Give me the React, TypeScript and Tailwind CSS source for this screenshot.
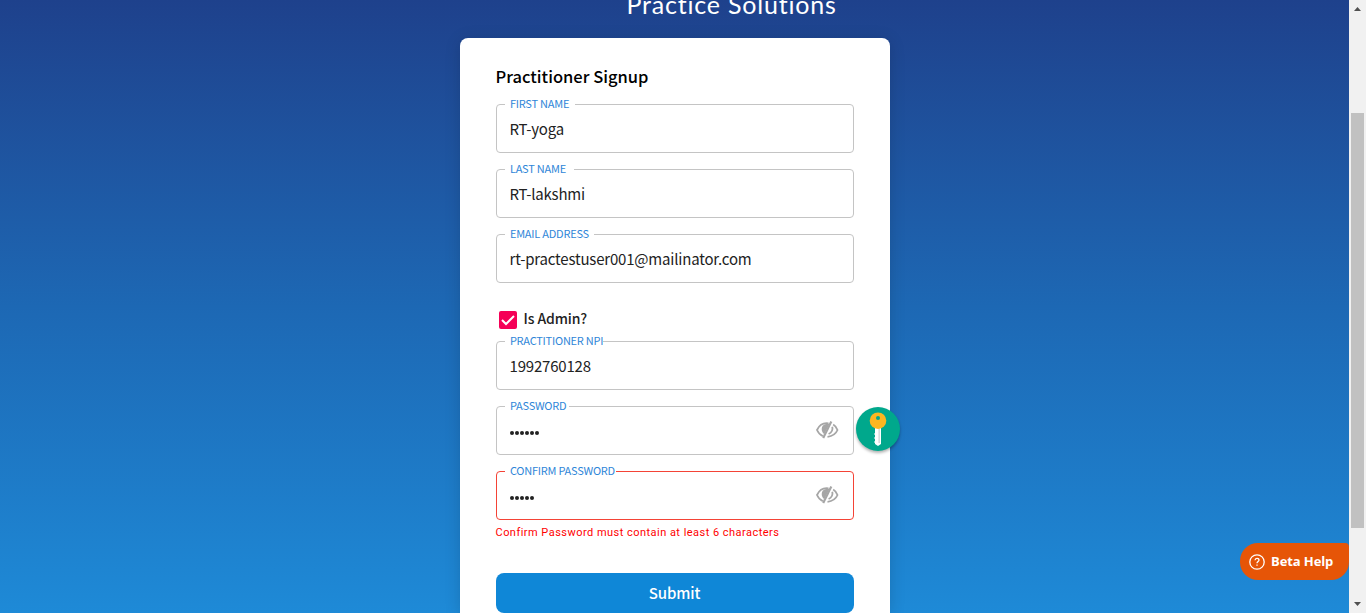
import { type ReactNode } from 'react';

const EyeOff = () => (
  <svg viewBox="0 0 24 20" className="h-5 w-6" fill="none" stroke="#a6a6a6" strokeWidth="1.800">
    <path d="M13.500 3.300C8 2.500 4 5.800 2 10c1.300 3 3.200 5 5.800 6.100" />
    <path d="M14.500 3.800 9.200 14.200C7 12.600 6.200 9.500 7 7c1.300-2.600 4-3.600 7.500-3.200Z" fill="#a6a6a6" stroke="none" />
    <path d="M16.300 1.500 8.200 18" strokeWidth="2.200" />
    <path d="M18.200 4.600c2 1.200 3.400 3 4.300 5.400-1.600 3.800-4.800 6.300-10 6.800M17.300 6.700c.7 3.300-.6 5.800-3.700 7.300" />
  </svg>
);

const Key = () => (
  <svg viewBox="0 0 44 44" className="h-11 w-11">
    <path d="M19 20h6v17l-3 2-3-2v-1l-1-1 1-1v-2l-1-1 1-1v-2l-1-1 1-1Z" fill="#fff" />
    <path d="M22.500 21h1.300v15h-1.300Z" fill="#cfd3d3" />
    <circle cx="22" cy="13.700" r="8.300" fill="#fcb620" />
    <circle cx="22" cy="11" r="2" fill="#00a88c" />
  </svg>
);

interface FieldProps {
  label: string;
  notch: string;
  value: ReactNode;
  error?: boolean;
  password?: boolean;
}

const Field = ({ label, notch, value, error, password }: FieldProps) => (
  <div className="relative flex h-[49px] w-[358px] items-center">
    <fieldset className={`absolute inset-x-0 -top-[5px] bottom-0 rounded-[4px] border pl-[8px] ${error ? 'border-[#f44336]' : 'border-[#c4c4c4]'}`}>
      <legend className={`h-[11px] ${notch}`} />
    </fieldset>
    <span className="absolute left-[14.400px] top-[-1px] -translate-y-1/2 whitespace-nowrap text-[11px] leading-4 tracking-[-0.23px] text-[#2f86d8]">{label}</span>
    <span className="relative flex-1 pb-px pl-[14px] pt-px text-[15px] leading-5 tracking-[-0.19px] text-[#222]">{value}</span>
    {password && <span className="relative mb-[2px] mr-[15px]"><EyeOff /></span>}
  </div>
);

const Dots = ({ count }: { count: number }) => (
  <span className="flex h-5 items-center gap-px pt-[5px]">
    {Array.from({ length: count }, (_, i) => <i key={i} className="size-1 rounded-full bg-[#222]" />)}
  </span>
);

export default function App() {
  return (
    <div className="flex h-[613px] w-[1366px] overflow-hidden font-['Noto_Sans_CJK_SC',sans-serif]">
      <main className="relative flex w-[1349px] flex-col items-center bg-linear-to-b from-[#1e418c] via-[#1d68b4] to-[#1e8ad7]">
        <h1 className="-mt-[13px] h-[51px] shrink-0 pl-[114px] font-['Lato',sans-serif] text-[25px] leading-[34px] tracking-[0.800px] text-white">Practice Solutions</h1>
        <section className="h-[575px] w-[430px] shrink-0 rounded-t-[8px] bg-white px-9 pt-[26px] shadow-[0_2px_16px_rgba(0,0,0,0.15)]">
          <h2 className="h-[40px] text-[16.500px] font-medium leading-6 text-black">Practitioner Signup</h2>
          <div className="flex flex-col gap-4">
            <Field label="FIRST NAME" notch="w-[70px]" value="RT-yoga" />
            <Field label="LAST NAME" notch="w-[69px]" value="RT-lakshmi" />
            <Field label="EMAIL ADDRESS" notch="w-[89px]" value="rt-practestuser001@mailinator.com" />
          </div>
          <div className="mt-[28px] flex h-[30px] gap-[7px] pl-[3px] text-[14px] font-medium leading-4 tracking-[-0.1px] text-[#222]">
            <svg viewBox="0 0 18 18" className="h-[18px] w-[18px]"><rect width="18" height="18" rx="2" fill="#f50057" /><path d="m3 9 4 4 8-8" fill="none" stroke="#fff" strokeWidth="2" /></svg>
            <span className="-mt-px">Is Admin?</span>
          </div>
          <div className="flex flex-col gap-4">
            <Field label="PRACTITIONER NPI" notch="w-[98px]" value="1992760128" />
            <Field label="PASSWORD" notch="w-[64px]" value={<Dots count={6} />} password />
            <Field label="CONFIRM PASSWORD" notch="w-[111px]" value={<Dots count={5} />} error password />
          </div>
          <p className="mt-[5px] h-[48px] font-['Roboto',sans-serif] text-[11px] leading-4 tracking-[0.47px] text-[#f00]">Confirm Password must contain at least 6 characters</p>
          <button className="h-10 w-full rounded-[8px] bg-[#0f87d7] text-[15px] font-medium tracking-[-0.1px] text-white">Submit</button>
        </section>
        <div className="absolute left-[856px] top-[407px] rounded-full bg-[#00a88c] shadow-[0_2px_3px_rgba(0,0,0,0.3)]"><Key /></div>
        <button className="absolute right-0 top-[543px] flex h-[37px] w-[109px] items-center gap-[6px] rounded-[18px] rounded-tr-[4px] bg-[#e65507] pl-[9px] font-['Open_Sans',sans-serif] text-[13px] font-bold tracking-[-0.1px] text-white">
          <svg viewBox="0 0 16 16" className="size-4" fill="none" stroke="#fff" strokeWidth="1.300"><circle cx="8" cy="8" r="7.200" /><path d="M6 6.200c.1-1.300.9-1.900 2-1.900s2 .7 2 1.800C10 7.500 8 7.700 8 9.300M8 10.500v1.300" /></svg>
          Beta Help
        </button>
      </main>
      <aside className="flex w-[17px] flex-col items-center bg-[#f1f1f1] pt-[7px]">
        <svg viewBox="0 0 7 4" className="h-1 w-[7px]"><path d="M0 4 3.500 0 7 4Z" fill="#505050" /></svg>
        <div className="mt-[102px] h-[415px] w-[13px] bg-[#c1c1c1]" />
        <svg viewBox="0 0 7 4" className="mt-[74px] h-1 w-[7px]"><path d="M0 0h7L3.500 4Z" fill="#505050" /></svg>
      </aside>
    </div>
  );
}
